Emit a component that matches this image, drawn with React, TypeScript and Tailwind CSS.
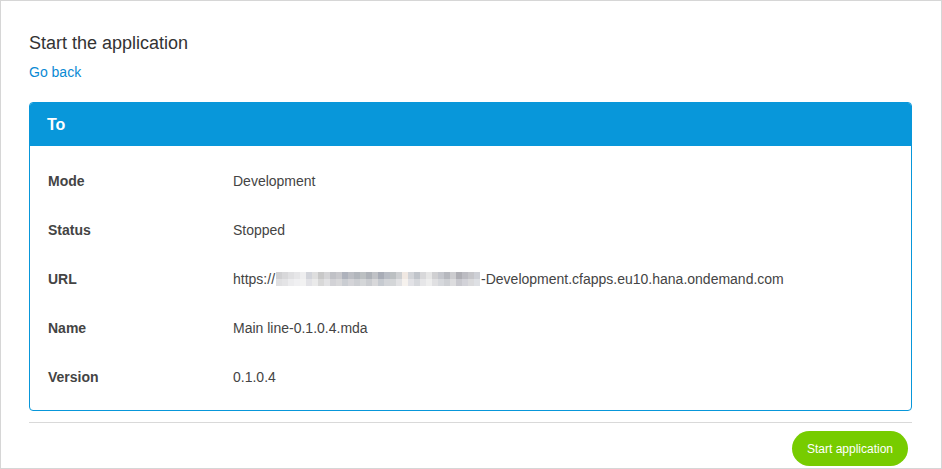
import React from "react";

const topRow = [
  "#d0d0d2","#d8d8da","#e0e0e2","#e6e6e8","#eeeeef","#d2d4da","#dedede","#c8c8c8",
  "#d4d4d6","#c0c1c6","#c8c8cc","#aeb2bc","#bcbec4","#b2b6bc","#bcc0c2","#aeb2b8",
  "#c0c2c6","#a8acb6","#b8bcc4","#bcc0c2","#ced0d2","#f0e8e2","#d2d4d8","#c0c4ca",
  "#d8d8da","#e6e6e6","#d0d0d2","#c4c6cc","#b6b8be","#cccccf","#aeaeb4","#bcbcc2",
  "#c6c6ca","#ced0d6",
];
const bottomRow = [
  "#e0e0e2","#e4e4e6","#ececee","#f0f0f2","#f2f2f2","#e2e2e6","#eaeaea","#d8d8d8",
  "#e2e2e4","#d2d2d6","#d8d8da","#cacdd2","#d4d4d8","#ccced2","#d4d6d8","#caccd0",
  "#d8d8da","#c6cad0","#d2d4d8","#d4d6d8","#e2e2e4","#f6f2ee","#e2e2e6","#d6d8dc",
  "#e6e6e8","#eeeeee","#e0e0e2","#d6d8dc","#ced0d4","#dcdcde","#c8c8ce","#d2d2d8",
  "#dadadc","#dee0e4",
];

function Blur() {
  return (
    <span className="inline-flex flex-col align-middle mx-[1px] -mt-[2px]">
      <span className="flex">
        {topRow.map((c, i) => (
          <span key={i} className="block w-[6px] h-[7px]" style={{ backgroundColor: c }} />
        ))}
      </span>
      <span className="flex">
        {bottomRow.map((c, i) => (
          <span key={i} className="block w-[6px] h-[7px]" style={{ backgroundColor: c }} />
        ))}
      </span>
    </span>
  );
}

const rows: { label: string; value: React.ReactNode }[] = [
  { label: "Mode", value: "Development" },
  { label: "Status", value: "Stopped" },
  {
    label: "URL",
    value: (
      <span className="inline-flex items-center">
        <span>https://</span>
        <Blur />
        <span>-Development.cfapps.eu10.hana.ondemand.com</span>
      </span>
    ),
  },
  { label: "Name", value: "Main line-0.1.0.4.mda" },
  { label: "Version", value: "0.1.0.4" },
];

export default function App() {
  return (
    <div
      className="w-[942px] h-[469px] border border-[#d6d6d6] bg-white pl-[28px] pr-[29px] pt-[30px] flex flex-col"
      style={{ fontFamily: '"Liberation Sans", Arial, sans-serif' }}
    >
      <h1 className="text-[18px] leading-[24px] text-[#333333] font-normal">Start the application</h1>
      <a href="#" className="mt-[7px] text-[14px] leading-[20px] text-[#0a8ad4] w-fit">
        Go back
      </a>
      <div className="mt-[20px] border border-[#0897da] rounded-[4px] overflow-hidden">
        <div className="h-[43px] bg-[#0897da] flex items-center pl-[17px]">
          <span className="text-white font-bold text-[16px]">To</span>
        </div>
        <div className="pt-[11px] pb-[8px]">
          {rows.map((r) => (
            <div key={r.label} className="h-[49px] flex items-center pl-[18px]">
              <div className="w-[185px] text-[14px] font-bold text-[#444444]">{r.label}</div>
              <div className="text-[14px] text-[#444444]">{r.value}</div>
            </div>
          ))}
        </div>
      </div>
      <div className="mt-[11px] h-px bg-[#d9d9d9]" />
      <div className="flex justify-end pr-[4px] mt-[8px]">
        <button className="h-[35px] w-[116px] rounded-full bg-[#77cc00] text-white text-[12px]">
          Start application
        </button>
      </div>
    </div>
  );
}
